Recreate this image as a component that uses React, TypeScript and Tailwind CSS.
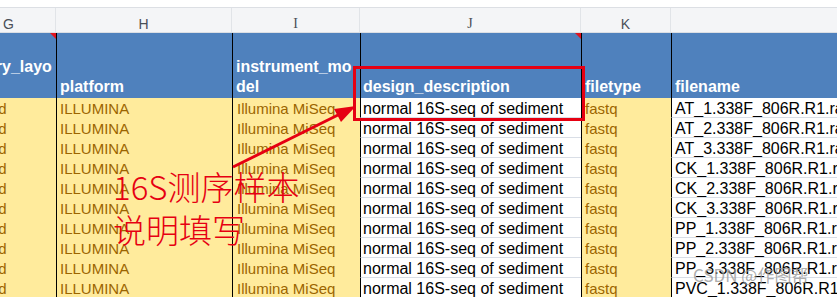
import React from 'react';

const files = [
  "AT_1", "AT_2", "AT_3", "CK_1", "CK_2", "CK_3", "PP_1", "PP_2", "PP_3", "PVC_1",
];

function Marker() {
  return (
    <span className="absolute right-0 top-0 h-0 w-0 border-l-[6px] border-t-[6px] border-l-transparent border-t-[#e0141e]"></span>
  );
}

export default function App() {
  return (
    <div className="relative w-[837px] h-[297px] overflow-hidden bg-white font-['Liberation_Sans',Arial,sans-serif]">
      <div className="-ml-[38px] w-max">
        <div className="h-[7px] bg-white"></div>

        {/* column letters */}
        <div className="flex h-[26px] border-y border-[#dcdfe4] bg-[#f4f5f7] text-[14px] leading-[14px] text-[#4a4f57]">
          <div className="w-[94px] border-r border-[#e1e4e8] pt-[9px] text-center">G</div>
          <div className="w-[176px] border-r border-[#e1e4e8] pt-[9px] text-center">H</div>
          <div className="w-[128px] border-r border-[#e1e4e8] pt-[9px] text-center font-['Liberation_Serif',serif]">I</div>
          <div className="w-[221px] border-r border-[#e1e4e8] pt-[9px] text-center font-['Liberation_Serif',serif]">J</div>
          <div className="w-[90px] border-r border-[#e1e4e8] pt-[9px] text-center">K</div>
          <div className="w-[400px] pt-[9px] text-center">L</div>
        </div>

        {/* header row */}
        <div className="flex h-[65px] bg-[#4f81bd] text-[16px] font-bold leading-[20px] text-white">
          <div className="relative flex w-[94px] flex-col justify-end pb-[1px] pl-[0px]">
            <span>library_layo</span>
            <span>ut</span>
            <Marker />
          </div>
          <div className="flex w-[176px] flex-col justify-end border-l border-black pb-[1px] pl-[3px]">platform</div>
          <div className="flex w-[128px] flex-col justify-end border-l border-black pb-[1px] pl-[3px]">
            <span>instrument_mo</span>
            <span>del</span>
          </div>
          <div className="relative flex w-[221px] flex-col justify-end border-l border-black pb-[1px] pl-[2px]">
            design_description
            <Marker />
          </div>
          <div className="flex w-[90px] flex-col justify-end border-l border-black pb-[1px] pl-[3px]">filetype</div>
          <div className="flex w-[400px] flex-col justify-end border-l border-black pb-[1px] pl-[3px]">filename</div>
        </div>

        {/* data rows */}
        {files.map((f) => (
          <div key={f} className="flex h-[20px] whitespace-nowrap">
            <div className="w-[94px] bg-[#ffeb9c] pl-[3px] pt-[2px] text-[15px] leading-[18px] text-[#9c6500]">paired</div>
            <div className="w-[176px] border-l border-black bg-[#ffeb9c] pl-[3px] pt-[2px] text-[15px] leading-[18px] text-[#9c6500]">ILLUMINA</div>
            <div className="w-[128px] border-l border-black bg-[#ffeb9c] pl-[4px] pt-[2px] text-[15px] leading-[18px] text-[#9c6500]">Illumina MiSeq</div>
            <div className="w-[221px] border-b border-l border-b-[#d9dee6] border-l-black bg-white pl-[2px] pt-[2px] text-[16px] leading-[18px] text-black">normal 16S-seq of sediment</div>
            <div className="w-[90px] border-l border-black bg-[#ffeb9c] pl-[3px] pt-[2px] text-[15px] leading-[18px] text-[#9c6500]">fastq</div>
            <div className="w-[400px] overflow-hidden border-b border-l border-b-[#d9dee6] border-l-black bg-white pl-[3px] pt-[2px] text-[16px] leading-[18px] text-black">
              {f}.338F_806R.R1.raw.fastq.gz
            </div>
          </div>
        ))}
      </div>

      {/* annotation: box around design_description */}
      <div className="absolute left-[353px] top-[66px] h-[55px] w-[232px] border-[3px] border-[#e60012]"></div>

      {/* annotation: arrow */}
      <svg className="pointer-events-none absolute left-0 top-0" width="837" height="297" viewBox="0 0 837 297">
        <line x1="233" y1="167" x2="340" y2="114" stroke="#e60012" strokeWidth="3" />
        <polygon points="356,106 334,109 341,122" fill="#e60012" />
      </svg>

      {/* annotation: note */}
      <div className="absolute left-[113px] top-[165px] text-[33px] font-light leading-[43px] text-[#e60012] font-['Noto_Sans_CJK_SC','Noto_Sans',sans-serif]">
        <div>16S测序样本</div>
        <div>说明填写</div>
      </div>

      {/* watermark */}
      <div className="absolute left-[693px] top-[264px] text-[17px] leading-[22px] text-[#999999]/80 font-['Noto_Sans_CJK_SC','Noto_Sans',sans-serif]">
        CSDN @作图帮
      </div>
    </div>
  );
}
